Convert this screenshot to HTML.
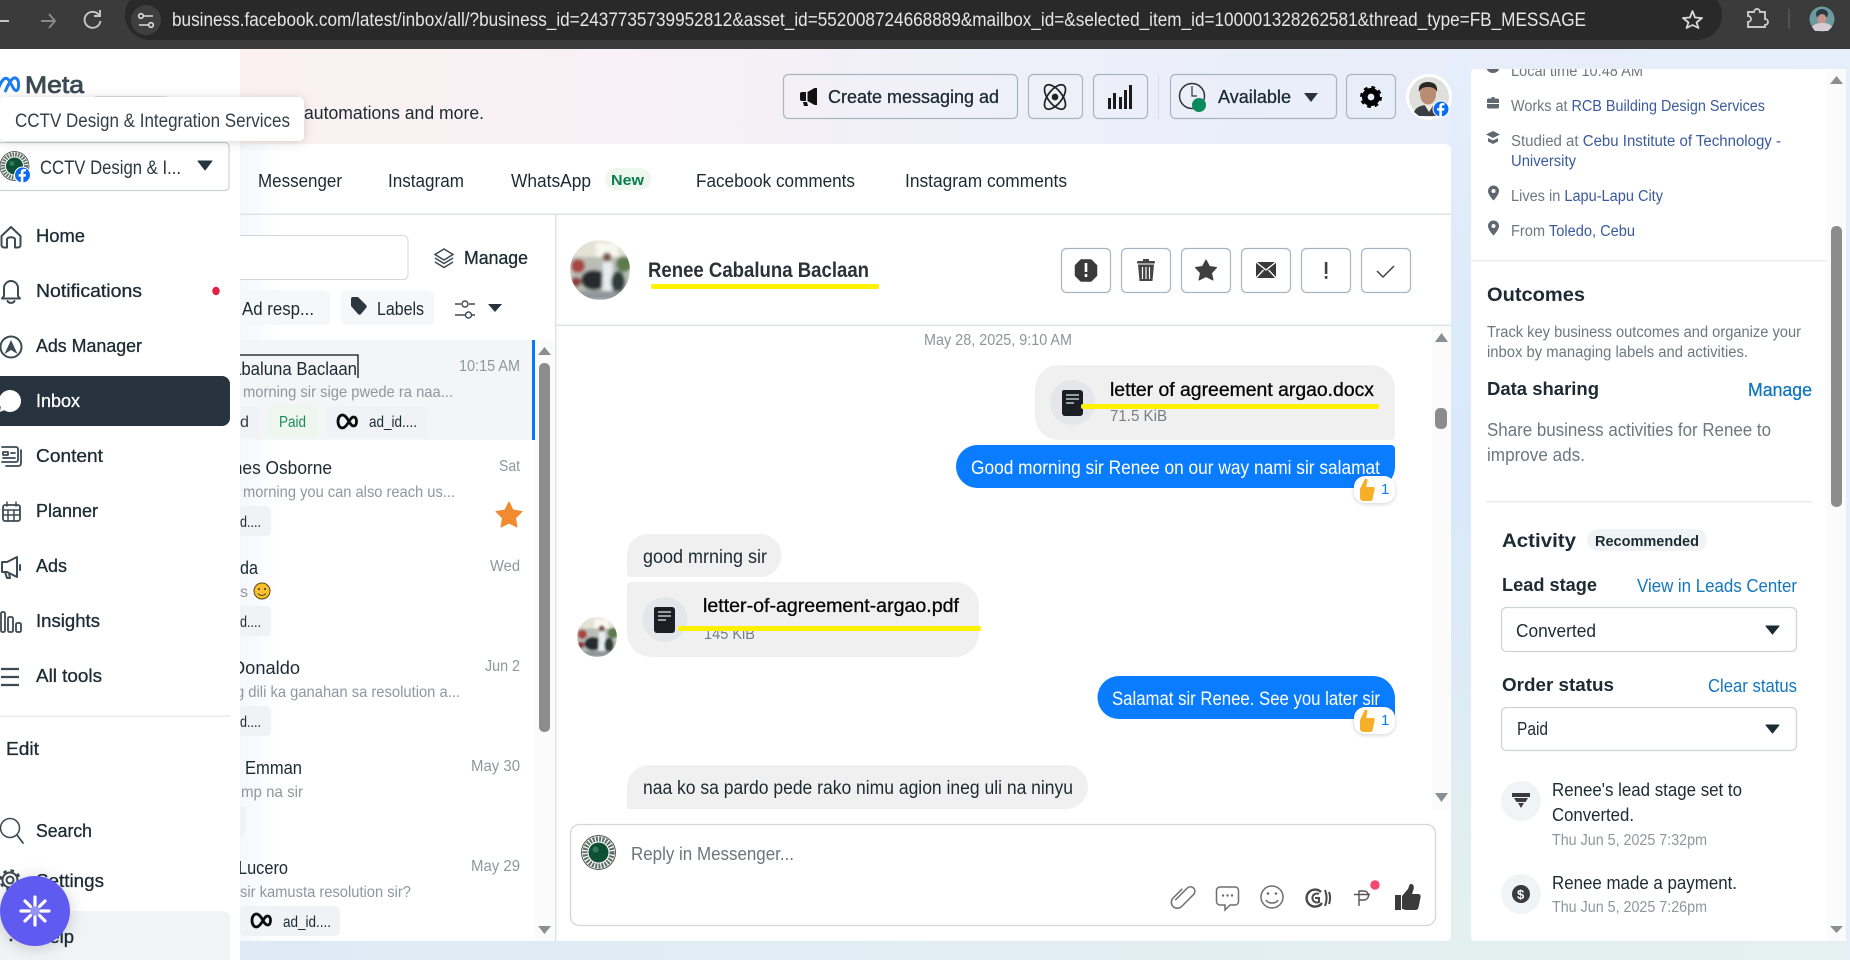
<!DOCTYPE html>
<html lang="en"><head><meta charset="utf-8"><title>Inbox</title>
<style>
html,body{margin:0;padding:0;width:1850px;height:960px;overflow:hidden}
body{background:linear-gradient(90deg,#fcf1ef 0%,#fbf1f0 13%,#f8f1f5 33%,#eef0f9 55%,#e7edf9 78%,#e6eefb 100%)}
svg{display:block;position:absolute;left:0;top:0}
text{font-family:"Liberation Sans",sans-serif;font-size:18px;fill:#1c2b33}
.m{stroke:currentColor;stroke-width:.3;color:#1c2b33}
.s{font-size:16px;fill:#8f979e}
.b{font-weight:700}
.p{font-size:15.5px;fill:#6c7880}
.l{fill:#3a5a9c}
.a{fill:#1277bd}
</style></head><body>
<svg width="1850" height="960" viewBox="0 0 1850 960" xmlns="http://www.w3.org/2000/svg">
<defs>
<linearGradient id="v" x1="0" y1="0" x2="0" y2="1"><stop offset="0" stop-color="#e6eefb"/><stop offset=".45" stop-color="#d9e8fa"/><stop offset=".75" stop-color="#dfecf4"/><stop offset="1" stop-color="#e4f1ee"/></linearGradient>
<linearGradient id="bt" x1="0" y1="0" x2="1" y2="0"><stop offset="0" stop-color="#deebf6"/><stop offset=".5" stop-color="#e2eef3"/><stop offset="1" stop-color="#e4f1ee"/></linearGradient>
<linearGradient id="t" x1="0" y1="0" x2="1" y2="0"><stop offset="0" stop-color="#f4f7fc"/><stop offset="1" stop-color="#fff"/></linearGradient>
<filter id="bl" x="-10%" y="-10%" width="120%" height="120%"><feGaussianBlur stdDeviation="1.600"/></filter>
<clipPath id="c30"><circle cx="30" cy="30" r="30"/></clipPath>
<clipPath id="pc"><rect x="1471" y="69" width="356" height="872"/></clipPath>
<g id="av"><g clip-path="url(#c30)"><g filter="url(#bl)">
<rect width="60" height="60" fill="#b9bdb6"/><rect x="0" y="0" width="60" height="17" fill="#e4e2d6"/><rect x="26" y="3" width="22" height="14" fill="#f8f8f2"/>
<circle cx="8" cy="26" r="7" fill="#a8453f"/><circle cx="6" cy="42" r="5" fill="#8d3a38"/><circle cx="54" cy="24" r="8" fill="#5d7a4e"/><ellipse cx="24" cy="40" rx="13" ry="10" fill="#25292d"/><path d="M33 22h9l2 26-5 5-7-3z" fill="#e6ecee"/><circle cx="37" cy="17" r="4.500" fill="#7a5443"/><ellipse cx="48" cy="42" rx="7" ry="11" fill="#2e3c37"/><rect y="51" width="60" height="9" fill="#8e979b"/></g></g></g>
<g id="logo"><circle r="17" fill="#fff" stroke="#4a5a52" stroke-width="1"/><circle r="13.500" fill="none" stroke="#5f6f66" stroke-width="5" stroke-dasharray="2 1.200"/><circle r="10" fill="#0f4f36"/><circle cx="-3" cy="-3" r="3" fill="#2f7a58"/></g>
<g id="fb"><circle r="8.500" fill="#fff"/><circle r="7.500" fill="#0a6cf0"/><path d="M.9 7.500V1.600h2.200l.4-2.500H.9v-1.500c0-.8.3-1.200 1.300-1.200h1.300v-2.200C3-5.900 2.200-6 1.600-6-.4-6-1.700-4.800-1.700-2.700v1.800H-3.800v2.500h2.100v5.900z" fill="#fff"/></g>
<path id="inf" d="M2 9.500c0-4 2-6.500 4.500-6.500 3 0 5 4 6.500 6.500 1.500 2.500 2.800 4.500 4.500 4.500 2 0 3-1.800 3-4.500s-1-4.500-3-4.500c-1.700 0-3 2-4.500 4.500S9 16 6.500 16C4 16 2 13.500 2 9.500z" fill="none" stroke="#0b0b0b" stroke-width="2.800"/>
<g id="thumb"><path d="M-7 -1l4.500-9.500c.8-1.500 3.300-1 3 1L-.8-3 6-3c1.500 0 2 1.200 1.600 2.500L5.500 9.500C5.200 10.500 4.400 11 3.500 11H-3c-2.500 0-4-1.200-4-3.500z" fill="#f6b028"/></g>
<path id="doc" d="M2 0h16a3 3 0 0 1 3 3v20a3 3 0 0 1-3 3H3a3 3 0 0 1-3-3V2a2 2 0 0 1 2-2z" fill="#1b1f25"/>
<path id="pin" d="M0-7.500a5.500 5.500 0 0 0-5.500 5.500C-5.500 2 0 7.500 0 7.500S5.500 2 5.500-2A5.500 5.500 0 0 0 0-7.500zm0 7.500a2 2 0 1 1 0-4 2 2 0 0 1 0 4z" fill="#5f6770"/>
</defs>

<!-- background tint -->
<rect x="1451" y="49" width="20" height="911" fill="url(#v)"/>
<rect x="240" y="941" width="1610" height="19" fill="url(#bt)"/>
<rect x="1846" y="49" width="4" height="911" fill="#e6eefa"/>

<!-- automations -->
<text x="304" y="119" textLength="180" lengthAdjust="spacingAndGlyphs">automations and more.</text>

<!-- top buttons -->
<g fill="none" stroke="#a9b5bf" stroke-width="1.200">
<rect x="783.500" y="74.500" width="234" height="44" rx="5"/>
<rect x="1028.500" y="74.500" width="54" height="44" rx="5"/>
<rect x="1093.500" y="74.500" width="54" height="44" rx="5"/>
<rect x="1170.500" y="74.500" width="166" height="44" rx="5"/>
<rect x="1346.500" y="74.500" width="49" height="44" rx="5"/>
</g>
<rect x="1158" y="74" width="1" height="45" fill="#d8dde6"/>
<path d="M802 92h4v9h-4a2 2 0 0 1-2-2v-5a2 2 0 0 1 2-2zM807.500 92l7-4h2.500v17h-2.500l-7-4zM803 102h4l1 4h-4z" fill="#111"/>
<text x="828" y="103" textLength="171" lengthAdjust="spacingAndGlyphs" class="m">Create messaging ad</text>
<g fill="none" stroke="#222" stroke-width="1.700" transform="translate(1055 97)">
<ellipse rx="14.500" ry="7" transform="rotate(52)"/><ellipse rx="14.500" ry="7" transform="rotate(-52)"/><circle r="2.500" fill="#222"/></g>
<g fill="#1a1a1a"><rect x="1108" y="98" width="3" height="11"/><rect x="1113" y="93" width="3" height="16"/><rect x="1119" y="97" width="3" height="12"/><rect x="1124" y="90" width="3" height="19"/><rect x="1129" y="85" width="3" height="24"/></g>
<circle cx="1192" cy="96" r="12.500" fill="none" stroke="#333" stroke-width="1.500"/><path d="M1192 86v10h5" fill="none" stroke="#333" stroke-width="1.200"/>
<circle cx="1199" cy="105" r="7" fill="#0b8a5c"/>
<text x="1218" y="103" textLength="73" lengthAdjust="spacingAndGlyphs" class="m">Available</text>
<polygon points="1304,93 1318,93 1311,102" fill="#27343f"/>
<g transform="translate(1371 97)"><circle r="6.200" fill="none" stroke="#000" stroke-width="5.600"/><circle r="9.500" fill="none" stroke="#000" stroke-width="3" stroke-dasharray="3.700 3.760"/></g>
<circle cx="1429" cy="97" r="23" fill="#fff"/>
<g filter="url(#bl)" style="filter:none"><circle cx="1429" cy="97" r="20" fill="#dfe0dc"/>
<path d="M1414 112c2-5 7-7 15-7s13 2 15 7l-5 4h-20z" fill="#3a3d42"/><path d="M1424 104l5 8 5-8z" fill="#efe9e2"/><ellipse cx="1428" cy="94" rx="8" ry="10.500" fill="#b98b73"/><path d="M1419 92c-1-7 3-10 9-10s10 3 9 10c-2-4-5-5-9-5s-7 1-9 5z" fill="#2b2724"/></g>
<use href="#fb" x="1441" y="109"/>

<!-- main card -->
<rect x="240" y="144" width="1211" height="797" rx="6" fill="#fff"/>
<rect x="240" y="144" width="40" height="797" fill="url(#t)"/>
<rect x="240" y="213.500" width="1211" height="1.500" fill="#e1e4e7"/>
<rect x="555" y="215" width="1.500" height="726" fill="#e1e4e7"/>
<rect x="556" y="324.500" width="895" height="1.500" fill="#e1e4e7"/>

<text x="258" y="187" textLength="84" lengthAdjust="spacingAndGlyphs">Messenger</text>
<text x="388" y="187" textLength="76" lengthAdjust="spacingAndGlyphs">Instagram</text>
<text x="511" y="187" textLength="80" lengthAdjust="spacingAndGlyphs">WhatsApp</text>
<rect x="605" y="168" width="46" height="22" rx="11" fill="#eef7ee"/>
<text x="611" y="185" textLength="33" lengthAdjust="spacingAndGlyphs" class="b" style="font-size:15px;fill:#0a7d4f">New</text>
<text x="696" y="187" textLength="159" lengthAdjust="spacingAndGlyphs">Facebook comments</text>
<text x="905" y="187" textLength="162" lengthAdjust="spacingAndGlyphs">Instagram comments</text>

<!-- search + chips -->
<rect x="220" y="235.500" width="188" height="44" rx="5" fill="#fff" stroke="#d3d7db"/>
<g fill="none" stroke="#3c4a54" stroke-width="1.500"><path d="M444 249l9 5.500-9 5.500-9-5.500z" fill="#fff"/><path d="M435 258l9 5.500 9-5.500"/><path d="M435 262l9 5.500 9-5.500"/></g>
<text x="464" y="264" textLength="64" lengthAdjust="spacingAndGlyphs" class="m">Manage</text>
<rect x="230" y="290" width="100" height="35" rx="6" fill="#f6f7f8"/>
<text x="242" y="315" textLength="72" lengthAdjust="spacingAndGlyphs">Ad resp...</text>
<rect x="341" y="290" width="93" height="35" rx="6" fill="#f6f7f8"/>
<path d="M351 299a2 2 0 0 1 2-2h5l8 8c1 1 1 2 0 3l-5 6c-1 1-2 1-3 0l-7-8z" fill="#2c3840"/>
<text x="377" y="315" textLength="47" lengthAdjust="spacingAndGlyphs">Labels</text>
<g fill="none" stroke="#3c4a54" stroke-width="1.400"><path d="M455 304h6M469 304h6M455 315h10M472 315h3"/><circle cx="465" cy="304" r="3"/><circle cx="468.500" cy="315" r="3"/></g>
<polygon points="488,304 502,304 495,312" fill="#27343f"/>

<!-- conversation list -->
<rect x="240" y="340" width="295" height="100" fill="#f3f5f7"/>
<rect x="532" y="340" width="3" height="100" fill="#0a78f5"/>
<path d="M230 355h128v23" fill="none" stroke="#111" stroke-width="1.300"/>
<text x="232" y="375" textLength="125" lengthAdjust="spacingAndGlyphs">abaluna Baclaan</text>
<text x="459" y="371" textLength="61" lengthAdjust="spacingAndGlyphs" class="s">10:15 AM</text>
<text x="243" y="397" textLength="210" lengthAdjust="spacingAndGlyphs" class="s">morning sir sige pwede ra naa...</text>
<rect x="230" y="406" width="29" height="32" rx="5" fill="#f0f2f5"/><text x="240" y="427" class="s" style="fill:#2f3a42">d</text>
<rect x="269" y="406" width="48" height="32" rx="5" fill="#eef7ee"/><text x="279" y="427" textLength="27" lengthAdjust="spacingAndGlyphs" style="font-size:16px;fill:#1a8a5a">Paid</text>
<rect x="327" y="406" width="100" height="32" rx="5" fill="#f0f2f5"/><use href="#inf" x="336" y="412"/>
<text x="369" y="427" textLength="48" lengthAdjust="spacingAndGlyphs" style="font-size:16px">ad_id....</text>

<text x="228" y="474" textLength="104" lengthAdjust="spacingAndGlyphs">mes Osborne</text>
<text x="499" y="471" textLength="21" lengthAdjust="spacingAndGlyphs" class="s">Sat</text>
<text x="243" y="497" textLength="212" lengthAdjust="spacingAndGlyphs" class="s">morning you can also reach us...</text>
<rect x="230" y="506" width="41" height="30" rx="5" fill="#f0f2f5"/><text x="240" y="527" textLength="21" lengthAdjust="spacingAndGlyphs" style="font-size:16px">d....</text>
<polygon points="509,502 513,510 522,511.500 515.500,518 517,527 509,523 501,527 502.500,518 496,511.500 505,510" fill="#f28b30" stroke="#f28b30" stroke-linejoin="round"/>

<text x="240" y="574" textLength="18" lengthAdjust="spacingAndGlyphs">da</text>
<text x="490" y="571" textLength="30" lengthAdjust="spacingAndGlyphs" class="s">Wed</text>
<text x="240" y="597" textLength="8" lengthAdjust="spacingAndGlyphs" class="s">s</text>
<circle cx="262" cy="591" r="8" fill="#fbc02d" stroke="#5c4410" stroke-width="1"/><circle cx="259" cy="589" r="1" fill="#333"/><circle cx="265" cy="589" r="1" fill="#333"/><path d="M258 593.500c2 2.500 6 2.500 8 0" fill="none" stroke="#333"/>
<rect x="230" y="606" width="41" height="30" rx="5" fill="#f0f2f5"/><text x="240" y="627" textLength="21" lengthAdjust="spacingAndGlyphs" style="font-size:16px">d....</text>

<text x="232" y="674" textLength="68" lengthAdjust="spacingAndGlyphs">Donaldo</text>
<text x="485" y="671" textLength="35" lengthAdjust="spacingAndGlyphs" class="s">Jun 2</text>
<text x="236" y="697" textLength="224" lengthAdjust="spacingAndGlyphs" class="s">g dili ka ganahan sa resolution a...</text>
<rect x="230" y="706" width="41" height="30" rx="5" fill="#f0f2f5"/><text x="240" y="727" textLength="21" lengthAdjust="spacingAndGlyphs" style="font-size:16px">d....</text>

<text x="245" y="774" textLength="57" lengthAdjust="spacingAndGlyphs">Emman</text>
<text x="471" y="771" textLength="49" lengthAdjust="spacingAndGlyphs" class="s">May 30</text>
<text x="241" y="797" textLength="62" lengthAdjust="spacingAndGlyphs" class="s">mp na sir</text>
<rect x="230" y="806" width="16" height="30" rx="5" fill="#f0f2f5"/>

<text x="238" y="874" textLength="50" lengthAdjust="spacingAndGlyphs">Lucero</text>
<text x="471" y="871" textLength="49" lengthAdjust="spacingAndGlyphs" class="s">May 29</text>
<text x="240" y="897" textLength="171" lengthAdjust="spacingAndGlyphs" class="s">sir kamusta resolution sir?</text>
<rect x="240" y="906" width="100" height="30" rx="5" fill="#f0f2f5"/><use href="#inf" x="250" y="911"/>
<text x="283" y="927" textLength="48" lengthAdjust="spacingAndGlyphs" style="font-size:16px">ad_id....</text>

<rect x="535" y="340" width="20" height="601" fill="#fbfbfb"/>
<polygon points="544.500,347 538,355 551,355" fill="#8a8f93"/>
<rect x="539" y="363" width="11" height="369" rx="5" fill="#8c8c8c"/>
<polygon points="538,926 551,926 544.500,934" fill="#8a8f93"/>

<!-- chat header -->
<use href="#av" x="570" y="240"/>
<text x="648" y="277" textLength="221" lengthAdjust="spacingAndGlyphs" class="b" style="font-size:21px;fill:#2a3238">Renee Cabaluna Baclaan</text>
<rect x="651" y="284" width="228" height="5" rx="2" fill="#fff200"/>
<g fill="#fff" stroke="#a6b4c0" stroke-width="1.200">
<rect x="1061.500" y="248.500" width="49" height="44" rx="5"/><rect x="1121.500" y="248.500" width="49" height="44" rx="5"/><rect x="1181.500" y="248.500" width="49" height="44" rx="5"/><rect x="1241.500" y="248.500" width="49" height="44" rx="5"/><rect x="1301.500" y="248.500" width="49" height="44" rx="5"/><rect x="1361.500" y="248.500" width="49" height="44" rx="5"/></g>
<polygon points="1081,260 1091,260 1096.500,265.500 1096.500,275.500 1091,281 1081,281 1075.500,275.500 1075.500,265.500" fill="#3a3a3a" stroke="#3a3a3a" stroke-linejoin="round" stroke-width="1.500"/><rect x="1084.700" y="263" width="2.600" height="9" fill="#fff"/><rect x="1084.700" y="274" width="2.600" height="3" fill="#fff"/>
<g fill="#444"><rect x="1137" y="261" width="18" height="2.500" rx="1"/><rect x="1143" y="259" width="6" height="3"/><path d="M1138 264.500h16l-1.500 16.500h-13z"/></g><g stroke="#fff" stroke-width="1.200"><path d="M1142.500 267v12M1146 267v12M1149.500 267v12"/></g>
<polygon points="1206,260 1209.500,266.500 1216.500,267.500 1211.500,273 1213,280 1206,276.500 1199,280 1200.500,273 1195.500,267.500 1202.500,266.500" fill="#3f3f3f" stroke="#3f3f3f" stroke-linejoin="round"/>
<rect x="1256" y="262" width="20" height="16" rx="1.500" fill="#3a3a3a"/><path d="M1256 262l10 8 10-8M1256 278l7.500-8M1276 278l-7.500-8" fill="none" stroke="#fff" stroke-width="1.300"/>
<rect x="1324.800" y="262" width="2.600" height="12" fill="#444"/><rect x="1324.800" y="276" width="2.600" height="2.800" fill="#444"/>
<path d="M1377 271l6 6 11-11" fill="none" stroke="#444" stroke-width="1.500"/>

<!-- chat -->
<text x="924" y="345" textLength="148" lengthAdjust="spacingAndGlyphs" class="s" style="fill:#8e9499">May 28, 2025, 9:10 AM</text>
<path d="M1059 365h312a24 24 0 0 1 24 24v47a4 4 0 0 1-4 4h-332a24 24 0 0 1-24-24v-27a24 24 0 0 1 24-24z" fill="#f0f0f0"/>
<circle cx="1072.500" cy="402.500" r="22.500" fill="#e4e6eb"/>
<use href="#doc" x="1062" y="390"/><path d="M1066 395h13M1066 399h13M1066 403h8" stroke="#e4e6eb" stroke-width="1.300"/>
<text x="1110" y="396" textLength="264" lengthAdjust="spacingAndGlyphs" class="m" style="color:#050505;fill:#050505;font-size:19px">letter of agreement argao.docx</text>
<text x="1110" y="421" textLength="57" lengthAdjust="spacingAndGlyphs" class="s" style="fill:#777d83">71.5 KiB</text>
<rect x="1081" y="404" width="298" height="5" rx="2" fill="#fff200"/>
<path d="M977.500 445h413.500a4 4 0 0 1 4 4v18a21 21 0 0 1-21 21h-396.500a21.500 21.500 0 0 1 0-43z" fill="#0a7cff"/>
<text x="971" y="474" textLength="409" lengthAdjust="spacingAndGlyphs" style="fill:#fff;font-size:19px">Good morning sir Renee on our way nami sir salamat</text>
<rect x="1354" y="476" width="41" height="27" rx="11" fill="#fff" style="filter:drop-shadow(0 1px 2px rgba(0,0,0,.18))"/>
<use href="#thumb" x="1367" y="490"/><text x="1381" y="494" style="font-size:15px;fill:#0a7cff">1</text>

<path d="M648 534h112a21.500 21.500 0 0 1 0 43h-129a4 4 0 0 1-4-4v-18a21 21 0 0 1 21-21z" fill="#f0f0f0"/>
<text x="643" y="563" textLength="124" lengthAdjust="spacingAndGlyphs" style="font-size:19px">good mrning sir</text>
<path d="M631 582h324a24 24 0 0 1 24 24v27a24 24 0 0 1-24 24h-304a24 24 0 0 1-24-24v-47a4 4 0 0 1 4-4z" fill="#f0f0f0"/>
<circle cx="665" cy="619.500" r="22.500" fill="#e4e6eb"/>
<use href="#doc" x="654" y="607"/><path d="M658 612h13M658 616h13M658 620h8" stroke="#e4e6eb" stroke-width="1.300"/>
<text x="703" y="612" textLength="256" lengthAdjust="spacingAndGlyphs" class="m" style="color:#050505;fill:#050505;font-size:19px">letter-of-agreement-argao.pdf</text>
<text x="704" y="639" textLength="51" lengthAdjust="spacingAndGlyphs" class="s" style="fill:#777d83">145 KiB</text>
<rect x="678" y="626" width="303" height="5" rx="2" fill="#fff200"/>
<use href="#av" transform="translate(577 617) scale(.667)"/>
<path d="M1119 676h254a22 22 0 0 1 22 22v17a4 4 0 0 1-4 4h-272a21.500 21.500 0 0 1 0-43z" fill="#0a7cff"/>
<text x="1112" y="705" textLength="268" lengthAdjust="spacingAndGlyphs" style="fill:#fff;font-size:19px">Salamat sir Renee. See you later sir</text>
<rect x="1354" y="707" width="41" height="27" rx="11" fill="#fff" style="filter:drop-shadow(0 1px 2px rgba(0,0,0,.18))"/>
<use href="#thumb" x="1367" y="721"/><text x="1381" y="725" style="font-size:15px;fill:#0a7cff">1</text>
<path d="M649 765h417a22 22 0 0 1 22 22a22 22 0 0 1-22 22h-439v-22a22 22 0 0 1 22-22z" fill="#f0f0f0"/>
<text x="643" y="794" textLength="430" lengthAdjust="spacingAndGlyphs" style="font-size:19px">naa ko sa pardo pede rako nimu agion ineg uli na ninyu</text>

<rect x="1432" y="326" width="19" height="483" fill="#fbfbfb"/>
<polygon points="1441.500,333 1435,342 1448,342" fill="#8a8f93"/>
<rect x="1435" y="408" width="12" height="21" rx="5" fill="#8c8c8c"/>
<polygon points="1435,793 1448,793 1441.500,802" fill="#8a8f93"/>

<!-- reply -->
<rect x="570.500" y="824.500" width="865" height="101" rx="9" fill="#fff" stroke="#d4d7da" stroke-width="1.300"/>
<use href="#logo" x="598.500" y="852.500"/>
<text x="631" y="860" textLength="163" lengthAdjust="spacingAndGlyphs" style="fill:#6d757c">Reply in Messenger...</text>
<g fill="none" stroke="#6f6f6f" stroke-width="1.500">
<path transform="rotate(45 1183 898)" d="M1179 905V888a4.500 4.500 0 0 1 9 0v17a6 6 0 0 1-12 0V892"/>
<path d="M1220 887h15a3.500 3.500 0 0 1 3.500 3.500v11a3.500 3.500 0 0 1-3.500 3.500h-5l-5 5v-5h-5a3.500 3.500 0 0 1-3.500-3.500v-11a3.500 3.500 0 0 1 3.500-3.500z"/>
<circle cx="1272" cy="897" r="11"/><path d="M1266 900c2 4 10 4 12 0"/>
</g>
<g fill="none" stroke="#4a4a4a">
<path d="M1321 892a8.500 8.500 0 1 0 1 11" stroke-width="2.400"/>
<path d="M1319 894a4.500 4.500 0 1 0 0 8v-4h-4" stroke-width="2"/>
<path d="M1325 890c2 5 2 11 0 16M1329 892c1.500 4 1.500 8 0 12" stroke-width="2"/>
<path d="M1359 906v-15h5a4.500 4.500 0 0 1 0 9h-5M1354 894.500h16" stroke="#555" stroke-width="1.400"/>
</g>
<circle cx="1268" cy="893.500" r="1.300" fill="#6a6a6a"/><circle cx="1276" cy="893.500" r="1.300" fill="#6a6a6a"/>
<circle cx="1223" cy="895.500" r="1.200" fill="#6a6a6a"/><circle cx="1227.500" cy="895.500" r="1.200" fill="#6a6a6a"/><circle cx="1232" cy="895.500" r="1.200" fill="#6a6a6a"/>
<circle cx="1375" cy="885" r="4.700" fill="#f5476b"/>
<path d="M1395 895h6v15h-6z" fill="#3b3b3b"/><path d="M1402 896l6-7c1-2 1-5 3-5 3 0 3.500 4 2 7l-1 3h6c2 0 3 1.500 2.500 3.500l-2 10c-.4 1.500-1.500 2.500-3 2.500h-9c-2 0-3-1-4.500-1z" fill="#3b3b3b"/>

<!-- right panel -->
<rect x="1471" y="69" width="375" height="872" rx="4" fill="#fff"/>
<g clip-path="url(#pc)">
<circle cx="1493" cy="66" r="7" fill="#5f6770"/>
<text x="1511" y="76" textLength="132" lengthAdjust="spacingAndGlyphs" class="p">Local time 10:48 AM</text>
<text x="1511" y="111" textLength="254" lengthAdjust="spacingAndGlyphs" class="p">Works at <tspan class="l">RCB Building Design Services</tspan></text>
<path d="M1487 101a1.500 1.500 0 0 1 1.500-1.500h3v-1.500h3v1.500h3a1.500 1.500 0 0 1 1.500 1.500v3h-12zM1487 105h12v3a1.500 1.500 0 0 1-1.500 1.500h-9a1.500 1.500 0 0 1-1.500-1.500z" fill="#5f6770" transform="translate(0 -1)"/>
<text x="1511" y="146" textLength="270" lengthAdjust="spacingAndGlyphs" class="p">Studied at <tspan class="l">Cebu Institute of Technology -</tspan></text>
<text x="1511" y="166" textLength="65" lengthAdjust="spacingAndGlyphs" class="l" style="font-size:15.500px">University</text>
<path d="M1493 131l7 3.500-7 3.500-7-3.500zM1488 138l5 2.500 5-2.500v3.500l-5 2.500-5-2.500z" fill="#5f6770"/>
<use href="#pin" x="1493.500" y="193"/>
<text x="1511" y="201" textLength="152" lengthAdjust="spacingAndGlyphs" class="p">Lives in <tspan class="l">Lapu-Lapu City</tspan></text>
<use href="#pin" x="1493.500" y="228"/>
<text x="1511" y="236" textLength="124" lengthAdjust="spacingAndGlyphs" class="p">From <tspan class="l">Toledo, Cebu</tspan></text>
</g>
<rect x="1471" y="260" width="356" height="1.500" fill="#e9ebed"/>
<text x="1487" y="301" textLength="98" lengthAdjust="spacingAndGlyphs" class="b" style="font-size:19px">Outcomes</text>
<text x="1487" y="337" textLength="314" lengthAdjust="spacingAndGlyphs" class="p">Track key business outcomes and organize your</text>
<text x="1487" y="357" textLength="261" lengthAdjust="spacingAndGlyphs" class="p">inbox by managing labels and activities.</text>
<text x="1487" y="395" textLength="112" lengthAdjust="spacingAndGlyphs" class="b" style="font-size:18px">Data sharing</text>
<text x="1748" y="396" textLength="64" lengthAdjust="spacingAndGlyphs" class="m a" style="color:#1277bd;font-size:18px">Manage</text>
<text x="1487" y="436" textLength="284" lengthAdjust="spacingAndGlyphs" style="fill:#6c7880;font-size:18px">Share business activities for Renee to</text>
<text x="1487" y="461" textLength="98" lengthAdjust="spacingAndGlyphs" style="fill:#6c7880;font-size:18px">improve ads.</text>
<rect x="1486" y="501" width="326" height="1.500" fill="#e9ebed"/>
<text x="1502" y="547" textLength="74" lengthAdjust="spacingAndGlyphs" class="b" style="font-size:19px">Activity</text>
<rect x="1587" y="529" width="120" height="22" rx="11" fill="#f1f4f7"/>
<text x="1595" y="546" textLength="104" lengthAdjust="spacingAndGlyphs" class="b" style="font-size:14.500px">Recommended</text>
<text x="1502" y="591" textLength="95" lengthAdjust="spacingAndGlyphs" class="b" style="font-size:18px">Lead stage</text>
<text x="1637" y="592" textLength="160" lengthAdjust="spacingAndGlyphs" class="a">View in Leads Center</text>
<rect x="1501.500" y="607.500" width="295" height="44" rx="5" fill="#fff" stroke="#ced3d7" stroke-width="1.200"/>
<text x="1516" y="637" textLength="80" lengthAdjust="spacingAndGlyphs">Converted</text>
<polygon points="1766,626 1779,626 1772.500,634" fill="#1c2b33" stroke="#1c2b33" stroke-linejoin="round"/>
<text x="1502" y="691" textLength="112" lengthAdjust="spacingAndGlyphs" class="b" style="font-size:18px">Order status</text>
<text x="1708" y="692" textLength="89" lengthAdjust="spacingAndGlyphs" class="a">Clear status</text>
<rect x="1501.500" y="707.500" width="295" height="43" rx="5" fill="#fff" stroke="#ced3d7" stroke-width="1.200"/>
<text x="1517" y="735" textLength="31" lengthAdjust="spacingAndGlyphs">Paid</text>
<polygon points="1766,725 1779,725 1772.500,733" fill="#1c2b33" stroke="#1c2b33" stroke-linejoin="round"/>
<circle cx="1521" cy="801" r="20" fill="#f1f4f7"/>
<path d="M1512 793h18v4h-18zM1514 798h14l-2.500 4h-9zM1518 803h6l-3 5z" fill="#3b3b3b"/>
<text x="1552" y="796" textLength="190" lengthAdjust="spacingAndGlyphs">Renee's lead stage set to</text>
<text x="1552" y="821" textLength="82" lengthAdjust="spacingAndGlyphs">Converted.</text>
<text x="1552" y="845" textLength="155" lengthAdjust="spacingAndGlyphs" class="s">Thu Jun 5, 2025 7:32pm</text>
<circle cx="1521" cy="894" r="20" fill="#f1f4f7"/>
<circle cx="1521" cy="894" r="9" fill="#3b3b3b"/><text x="1517" y="899" class="b" style="font-size:13px;fill:#fff">$</text>
<text x="1552" y="889" textLength="185" lengthAdjust="spacingAndGlyphs">Renee made a payment.</text>
<text x="1552" y="912" textLength="155" lengthAdjust="spacingAndGlyphs" class="s">Thu Jun 5, 2025 7:26pm</text>
<rect x="1827" y="69" width="19" height="872" fill="#fbfbfb"/>
<polygon points="1836.500,76 1830,84 1843,84" fill="#8a8f93"/>
<rect x="1831" y="226" width="11" height="281" rx="5" fill="#8c8c8c"/>
<polygon points="1830,926 1843,926 1836.500,933" fill="#8a8f93"/>

<!-- sidebar -->
<rect x="0" y="49" width="240" height="911" fill="#fff"/>
<path d="M-3 92C0 84 3 77 7 78.500C10.500 80 13 91 16.500 90.500C19.500 90 19.500 79 15.500 78C11.500 77 8 85 5 92" fill="none" stroke="#1d7cf2" stroke-width="3"/>
<text x="25" y="93" textLength="59" lengthAdjust="spacingAndGlyphs" style="font-size:24px;fill:#3c4a54;stroke:#3c4a54;stroke-width:.8">Meta</text>
<rect x="95" y="96" width="72" height="1.500" fill="#dfe1e3"/>

<rect x="-2" y="142.500" width="231" height="48" rx="4" fill="#fff" stroke="#ccd2d6" stroke-width="1.200"/>
<use href="#logo" transform="translate(14.500 166) scale(.85)"/>
<g transform="translate(22.500 175)"><use href="#fb"/></g>
<text x="40" y="174" textLength="141" lengthAdjust="spacingAndGlyphs" style="fill:#2a3840;font-size:19px">CCTV Design &amp; I...</text>
<polygon points="198,161 212,161 205,170" fill="#27343f" stroke="#27343f" stroke-linejoin="round"/>

<g fill="none" stroke="#3c4a54" stroke-width="2" stroke-linejoin="round" stroke-linecap="round">
<path d="M1.500 236l9.500-9 9.500 9v9a2.500 2.500 0 0 1-2.500 2.500h-3v-8c0-3-8-3-8 0v8H4a2.500 2.500 0 0 1-2.500-2.500z"/>
<path d="M4 296v-8a7 7 0 0 1 14 0v8l2 2.500H2zM7.500 301c1 2.500 6 2.500 7 0"/>
<circle cx="11" cy="347" r="10.500"/>
<path d="M2 447h14a2 2 0 0 1 2 2v11a2 2 0 0 1-2 2H2M21 450v13c0 2-1 3-3 3H6M3 452h5v3H3zM11 453h4M3 458h12" stroke-width="1.800"/>
<rect x="3" y="505" width="17" height="16" rx="2" stroke-width="1.800"/><path d="M7 502v4M16 502v4M3 510h17M8 510v11M14 510v11M3 515h17" stroke-width="1.500"/>
<path d="M2 562h5l10-5v20l-10-5H2zM5 572l2 6h3l-1-5M20 565v5" stroke-width="2"/>
<rect x="1" y="612" width="4" height="20" rx="1.500" stroke-width="1.800"/><rect x="8" y="617" width="5" height="15" rx="1.500" stroke-width="1.800"/><rect x="16" y="623" width="5" height="9" rx="1.500" stroke-width="1.800"/>
<path d="M1 669h18M1 677h18M1 685h18" stroke-width="2.200" stroke-linecap="butt"/>
<circle cx="10" cy="828" r="9.500" stroke-width="1.500"/><path d="M17 835l6 8" stroke-width="1.800"/>
<circle cx="10" cy="880" r="3.500"/><circle cx="10" cy="880" r="7.500"/><circle cx="10" cy="880" r="9.500" stroke-width="2.500" stroke-dasharray="3.500 4" stroke-linecap="butt"/>
</g>
<path d="M11 340l6.500 14-6.500-4-6.500 4z" fill="#3c4a54"/>
<text x="36" y="242" textLength="49" lengthAdjust="spacingAndGlyphs" class="m">Home</text>
<text x="36" y="297" textLength="106" lengthAdjust="spacingAndGlyphs" class="m">Notifications</text>
<ellipse cx="216" cy="291" rx="3.700" ry="4.200" fill="#e41e3f"/>
<text x="36" y="352" textLength="106" lengthAdjust="spacingAndGlyphs" class="m">Ads Manager</text>
<path d="M-2 376h224a8 8 0 0 1 8 8v34a8 8 0 0 1-8 8H-2z" fill="#27343f"/>
<circle cx="10" cy="401" r="11" fill="#fff"/><path d="M1 404l-1 8 7-3z" fill="#fff"/>
<text x="36" y="407" textLength="44" lengthAdjust="spacingAndGlyphs" class="m" style="fill:#fff;color:#fff">Inbox</text>
<text x="36" y="462" textLength="67" lengthAdjust="spacingAndGlyphs" class="m">Content</text>
<text x="36" y="517" textLength="62" lengthAdjust="spacingAndGlyphs" class="m">Planner</text>
<text x="36" y="572" textLength="31" lengthAdjust="spacingAndGlyphs" class="m">Ads</text>
<text x="36" y="627" textLength="64" lengthAdjust="spacingAndGlyphs" class="m">Insights</text>
<text x="36" y="682" textLength="66" lengthAdjust="spacingAndGlyphs" class="m">All tools</text>
<rect x="0" y="715.500" width="230" height="1.500" fill="#e8eaec"/>
<text x="6" y="755" textLength="33" lengthAdjust="spacingAndGlyphs" class="m">Edit</text>
<text x="36" y="837" textLength="56" lengthAdjust="spacingAndGlyphs" class="m">Search</text>
<text x="36" y="887" textLength="68" lengthAdjust="spacingAndGlyphs" class="m">Settings</text>
<path d="M-2 911h224a8 8 0 0 1 8 8v41H-2z" fill="#f1f4f7"/>
<text x="36" y="943" textLength="38" lengthAdjust="spacingAndGlyphs" class="m">Help</text>
<circle cx="11" cy="940" r="1.500" fill="#3c4a54"/>

<!-- tooltip -->
<rect x="0" y="97" width="304" height="44" rx="5" fill="#fff" style="filter:drop-shadow(0 1px 5px rgba(0,0,0,.16))"/>
<text x="15" y="127" textLength="275" lengthAdjust="spacingAndGlyphs" style="fill:#344049;font-size:19px">CCTV Design &amp; Integration Services</text>

<!-- floating button -->
<circle cx="35" cy="911" r="35" fill="#5f5bf1" style="filter:drop-shadow(0 2px 8px rgba(0,0,0,.18))"/>
<g stroke="#fff" stroke-width="3.200" stroke-linecap="round"><path d="M35 897v8M35 917v8M21 911h8M41 911h8M25 901l5.500 5.500M39.500 915.500l5.500 5.500M45 901l-5.500 5.500M30.500 915.500l-5.500 5.500"/></g>
<circle cx="35" cy="911" r="5" fill="#fff" opacity=".35"/>

<!-- browser chrome -->
<rect x="0" y="0" width="1850" height="49" fill="#3b3b3b"/>
<rect x="125" y="-10" width="1597" height="50" rx="25" fill="#292929"/>
<g fill="none" stroke="#c7c7c7" stroke-width="1.900">
<path d="M-4 21h13M-1 14l-6 7 6 7"/>
<path d="M41 21h14M49 14l6 7-6 7" stroke="#8a8a8a"/>
<path d="M99 15a8 8 0 1 0 1.500 6M100 10v6h-6"/>
</g>
<circle cx="146" cy="20" r="15" fill="#3f3f3f"/>
<g fill="none" stroke="#dcdcdc" stroke-width="1.600"><path d="M143 16h10M139 25h9"/><circle cx="141" cy="16" r="2.300"/><circle cx="151" cy="25" r="2.300"/></g>
<text x="172" y="26" textLength="1414" lengthAdjust="spacingAndGlyphs" style="fill:#e6e6e6;font-size:19px">business.facebook.com/latest/inbox/all/?business_id=2437735739952812&amp;asset_id=552008724668889&amp;mailbox_id=&amp;selected_item_id=100001328262581&amp;thread_type=FB_MESSAGE</text>
<polygon points="1692.500,11 1695,17.500 1702,18 1696.500,22.500 1698.500,28 1692.500,25 1686.500,28 1688.500,22.500 1683,18 1690,17.500" fill="none" stroke="#d9d9d9" stroke-width="1.800" stroke-linejoin="round"/>
<path d="M1748 12h6a3 3 0 0 1 6 0h5v7a3 3 0 0 1 0 6v2h-17v-5a3 3 0 0 0 0-6z" fill="none" stroke="#c7c7c7" stroke-width="1.900"/>
<rect x="1788.500" y="9" width="1" height="20" fill="#666"/>
<circle cx="1822" cy="19" r="12.500" fill="#6c9a9e"/><ellipse cx="1822" cy="14" rx="6" ry="5" fill="#2a3a44"/><ellipse cx="1822" cy="19" rx="4.500" ry="5" fill="#c8948c"/><path d="M1812 27c3-4 7-4 10-4s8 0 10 4l-4 4h-13z" fill="#d6cdd2"/>
</svg>
</body></html>
